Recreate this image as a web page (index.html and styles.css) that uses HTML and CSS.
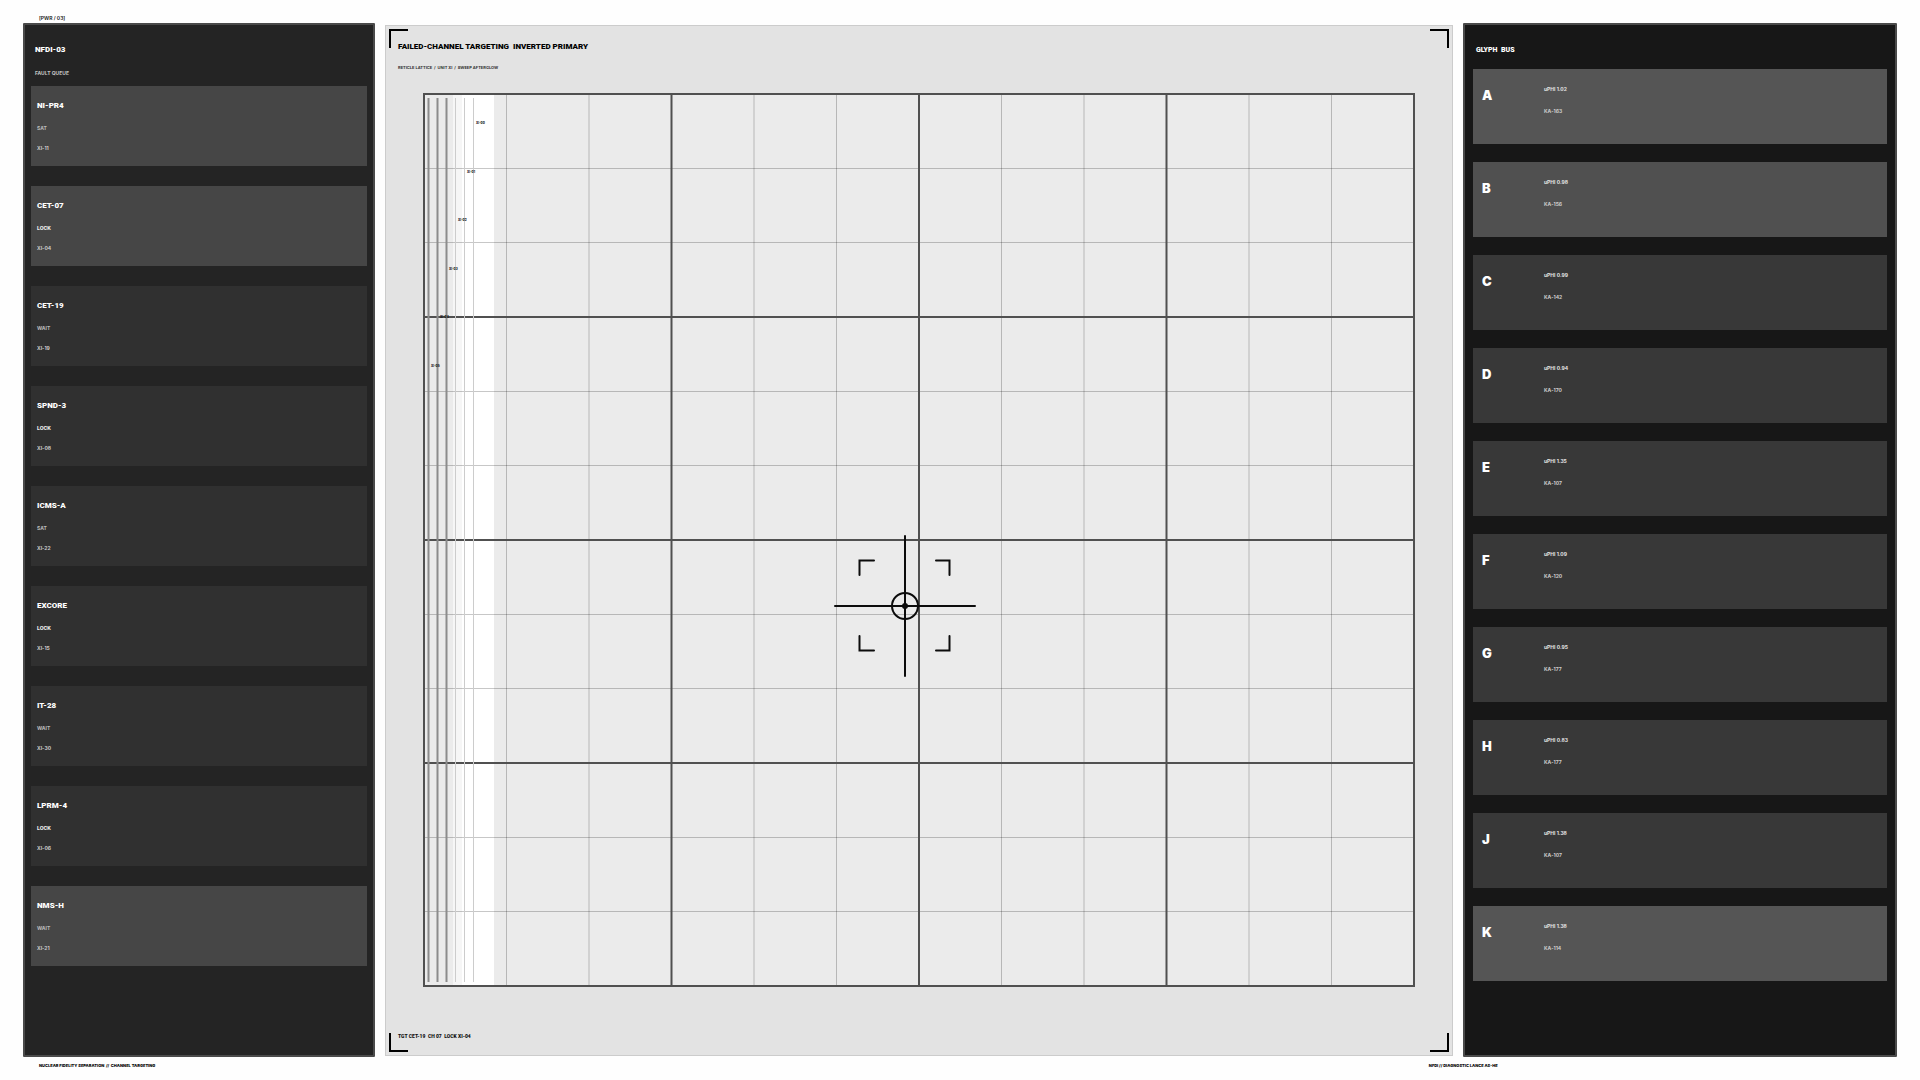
FILE: index.html
```html
<!DOCTYPE html>
<html lang="en">
<head>
    <meta charset="UTF-8">
    <meta name="viewport" content="width=device-width, initial-scale=1.0">
    <title>NFDI-03 Channel Targeting</title>
    <link rel="stylesheet" href="styles.css">
</head>
<body>
    <header class="topline">[PWR / 03]</header>

    <main class="console">
        <aside class="panel queue">
            <h2>NFDI-03</h2>
            <h3>FAULT QUEUE</h3>
            <ul>
                <li class="fault hot"><b>NI-PR4</b><span>SAT</span><small>XI-11</small></li>
                <li class="fault hot"><b>CET-07</b><span class="lock">LOCK</span><small>XI-04</small></li>
                <li class="fault"><b>CET-19</b><span>WAIT</span><small>XI-19</small></li>
                <li class="fault"><b>SPND-3</b><span class="lock">LOCK</span><small>XI-08</small></li>
                <li class="fault"><b>ICMS-A</b><span>SAT</span><small>XI-22</small></li>
                <li class="fault"><b>EXCORE</b><span class="lock">LOCK</span><small>XI-15</small></li>
                <li class="fault"><b>IT-28</b><span>WAIT</span><small>XI-30</small></li>
                <li class="fault"><b>LPRM-4</b><span class="lock">LOCK</span><small>XI-06</small></li>
                <li class="fault hot"><b>NMS-H</b><span>WAIT</span><small>XI-21</small></li>
            </ul>
        </aside>

        <section class="stage">
            <i class="corner tl"></i>
            <i class="corner tr"></i>
            <i class="corner bl"></i>
            <i class="corner br"></i>
            <h1>FAILED-CHANNEL TARGETING &nbsp;INVERTED PRIMARY</h1>
            <p class="sub">RETICLE LATTICE &nbsp;/&nbsp; UNIT XI &nbsp;/&nbsp; SWEEP AFTERGLOW</p>

            <svg class="plot" viewBox="0 0 992 894">
                <rect class="field" x="1" y="1" width="990" height="892"/>
                <!-- sweep -->
                <rect class="glow" x="30" y="2" width="9" height="890"/>
                <rect class="beam" x="39" y="2" width="32" height="890"/>
                <!-- minor lattice -->
                <path class="minor" d="M83.5 2V892M166 2V892M331 2V892M413.5 2V892M578.5 2V892M661 2V892M826 2V892M908.5 2V892"/>
                <path class="minor" d="M2 75.5H990M2 149.5H990M2 298.5H990M2 372.5H990M2 521.5H990M2 595.5H990M2 744.5H990M2 818.5H990"/>
                <!-- major lattice -->
                <path class="major" d="M248.5 1V893M496 1V893M743.5 1V893M1 224H991M1 447H991M1 670H991"/>
                <rect class="frame" x="1" y="1" width="990" height="892"/>
                <!-- afterglow trails -->
                <path class="trail" d="M5.5 5V889M14.5 5V889M23.5 5V889"/>
                <path class="trail faint" d="M32.5 5V889M41.5 5V889M50.5 5V889"/>
                <g class="tags">
                    <text x="53" y="31">XI-00</text>
                    <text x="44" y="80">XI-01</text>
                    <text x="35" y="128">XI-02</text>
                    <text x="26" y="177">XI-03</text>
                    <text x="17" y="225">XI-04</text>
                    <text x="8" y="274">XI-05</text>
                </g>
                <!-- reticle -->
                <g class="reticle">
                    <path d="M412 513H552M482 443V583"/>
                    <circle cx="482" cy="513" r="13"/>
                    <path class="bracket" d="M436.5 482V467.5H451M513 467.5H526.5V482M436.5 543V557.5H451M513 557.5H526.5V543"/>
                    <circle class="dot" cx="482" cy="513" r="3"/>
                </g>
            </svg>

            <p class="target">TGT CET-19 &nbsp;CH 07 &nbsp;LOCK XI-04</p>
        </section>

        <aside class="panel bus">
            <h2>GLYPH &nbsp;BUS</h2>
            <ul>
                <li class="glyph bright"><b>A</b><div><span>uPHI 1.02</span><small>KA-163</small></div></li>
                <li class="glyph warm"><b>B</b><div><span>uPHI 0.98</span><small>KA-156</small></div></li>
                <li class="glyph"><b>C</b><div><span>uPHI 0.99</span><small>KA-142</small></div></li>
                <li class="glyph"><b>D</b><div><span>uPHI 0.94</span><small>KA-170</small></div></li>
                <li class="glyph"><b>E</b><div><span>uPHI 1.35</span><small>KA-107</small></div></li>
                <li class="glyph"><b>F</b><div><span>uPHI 1.09</span><small>KA-120</small></div></li>
                <li class="glyph"><b>G</b><div><span>uPHI 0.95</span><small>KA-177</small></div></li>
                <li class="glyph"><b>H</b><div><span>uPHI 0.83</span><small>KA-177</small></div></li>
                <li class="glyph"><b>J</b><div><span>uPHI 1.38</span><small>KA-107</small></div></li>
                <li class="glyph bright"><b>K</b><div><span>uPHI 1.38</span><small>KA-114</small></div></li>
            </ul>
        </aside>
    </main>

    <footer class="baseline">
        <span>NUCLEAR FIDELITY SEPARATION &nbsp;//&nbsp; CHANNEL TARGETING</span>
        <span>NFDI // DIAGNOSTIC LANCE AS-HE</span>
    </footer>
</body>
</html>
```
FILE: styles.css
```css
* {
    box-sizing: border-box;
    margin: 0;
    padding: 0;
}
body {
    display: flex;
    flex-direction: column;
    min-height: 100vh;
    background: #fefefe;
    color: #111;
    font-family: Inter, "Liberation Sans", sans-serif;
}
ul {
    list-style: none;
}
h1,
h2,
.fault b,
.target {
    font-family: Roboto, "Liberation Sans", sans-serif;
}
.topline {
    height: 23px;
    padding: 14px 39px 0;
    font-size: 5px;
    line-height: 8px;
    font-weight: 600;
}
.console {
    flex: 1;
    display: grid;
    grid-template-columns: 352fr 1068fr 434fr;
    gap: 10px;
    padding: 0 23px;
}

/* side panels */
.panel {
    border: 2px solid #4a4a4a;
    border-radius: 1px;
    color: #fff;
}
.panel h2 {
    font-size: 8px;
    line-height: 12px;
    font-weight: 900;
}
.panel span,
.panel small {
    display: block;
    line-height: 8px;
}
.queue {
    padding: 19px 6px;
    background: #242424;
}
.queue h2,
.queue h3 {
    padding-left: 4px;
}
.queue h3 {
    margin: 13px 0 9px;
    font-size: 5px;
    line-height: 8px;
    font-weight: 700;
    color: #c4c4c4;
}
.fault {
    height: 80px;
    margin-bottom: 20px;
    padding: 14px 6px;
    background: #303030;
}
.fault.hot {
    background: #464646;
}
.fault b {
    display: block;
    margin-bottom: 12px;
    font-size: 8px;
    line-height: 12px;
    font-weight: 900;
}
.fault span {
    margin-bottom: 12px;
    font-size: 5px;
    font-weight: 700;
    color: #bbb;
}
.fault .lock {
    font-weight: 800;
    color: #eee;
}
.fault small {
    font-size: 5px;
    font-weight: 700;
    color: #ccc;
}
.bus {
    padding: 19px 8px;
    background: #171717;
}
.bus h2 {
    padding-left: 3px;
    margin-bottom: 13px;
    font-size: 7px;
}
.glyph {
    display: flex;
    height: 75px;
    margin-bottom: 18px;
    padding: 16px 9px;
    background: #383838;
}
.glyph.warm {
    background: #505050;
}
.glyph.bright {
    background: #555;
}
.glyph b {
    width: 62px;
    font-size: 13px;
    line-height: 20px;
    font-weight: 900;
}
.glyph span {
    margin-bottom: 14px;
    font-size: 5px;
    font-weight: 700;
    color: #e4e4e4;
}
.glyph small {
    font-size: 5px;
    font-weight: 700;
    color: #ccc;
}

/* targeting stage */
.stage {
    position: relative;
    display: flex;
    flex-direction: column;
    margin: 2px 0 1px;
    padding: 15px 12px;
    border: 1px solid #ccc;
    background: #e3e3e3;
}
.stage h1 {
    font-size: 8px;
    line-height: 12px;
    font-weight: 900;
    color: #000;
}
.stage .sub {
    margin: 11px 0 21px;
    font-size: 4px;
    line-height: 8px;
    font-weight: 700;
    color: #333;
}
.stage .target {
    margin-top: auto;
    font-size: 5px;
    line-height: 8px;
    font-weight: 900;
}
.corner {
    position: absolute;
    width: 19px;
    height: 19px;
    border: 0 solid #000;
}
.tl { top: 3px; left: 3px; border-width: 2px 0 0 2px; }
.tr { top: 3px; right: 3px; border-width: 2px 2px 0 0; }
.bl { bottom: 3px; left: 3px; border-width: 0 0 2px 2px; }
.br { bottom: 3px; right: 3px; border-width: 0 2px 2px 0; }

.plot {
    display: block;
    margin: 0 25px;
}
.plot path {
    fill: none;
}
.field { fill: #ebebeb; }
.glow { fill: #f6f6f6; }
.beam { fill: #fff; }
.minor { stroke: #000; stroke-opacity: 0.22; }
.major { stroke: #505050; stroke-width: 2; }
.frame { fill: none; stroke: #505050; stroke-width: 2; }
.trail { stroke: #8c8c8c; stroke-width: 2; }
.trail.faint { stroke: #ccc; stroke-width: 1; }
.tags {
    font-size: 3px;
    font-weight: 800;
    fill: #111;
}
.reticle {
    fill: none;
    stroke: #0c0c0c;
    stroke-width: 2;
    stroke-linecap: round;
}
.reticle .dot { fill: #0c0c0c; stroke: none; }

.baseline {
    display: flex;
    justify-content: space-between;
    height: 23px;
    padding: 5px 22vw 0 39px;
    font-size: 4px;
    line-height: 8px;
    font-weight: 900;
}
```
